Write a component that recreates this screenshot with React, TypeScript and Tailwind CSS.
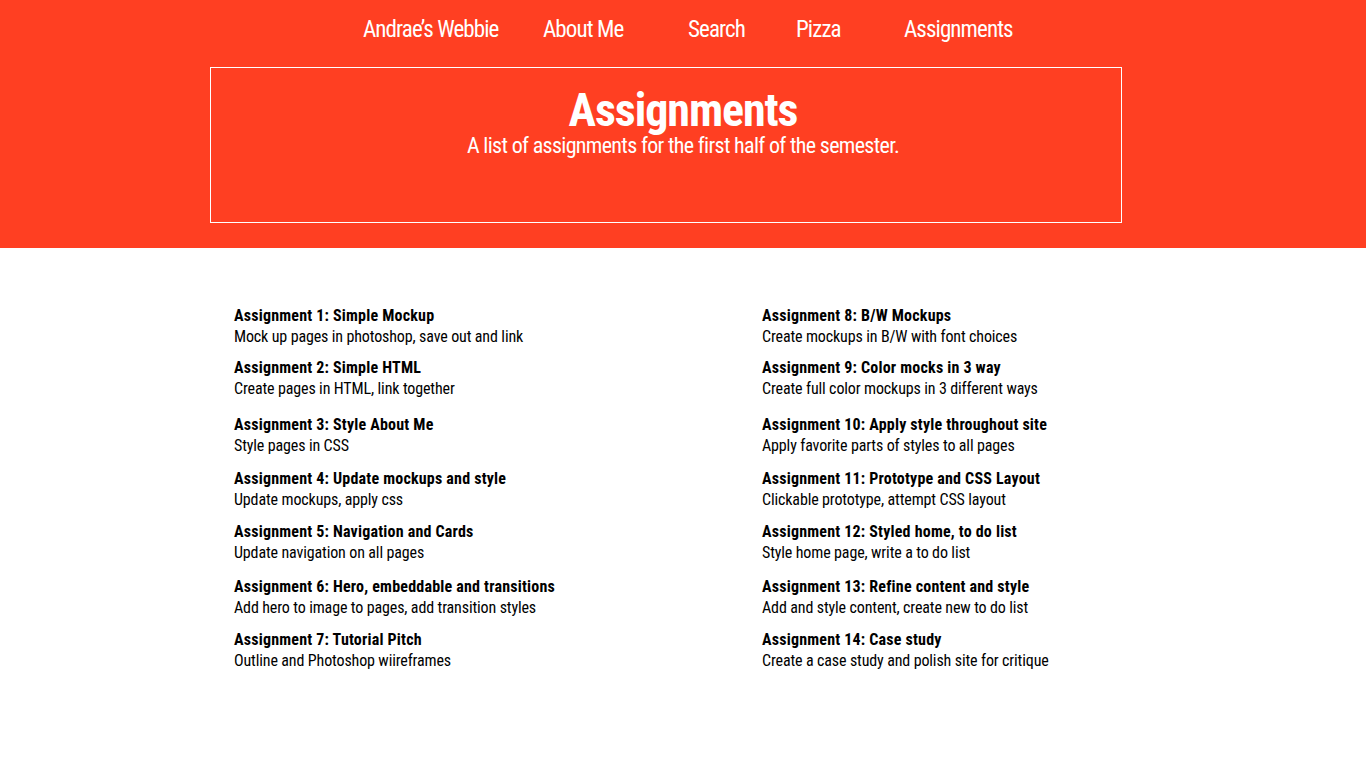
const nav = [
  { label: "Andrae’s Webbie", w: "w-[180px]" },
  { label: "About Me", w: "w-[145px]" },
  { label: "Search", w: "w-[108px]" },
  { label: "Pizza", w: "w-[108px]" },
  { label: "Assignments", w: "w-auto" },
];

// each row: left + right assignment, with spacing before it
const rows = [
  {
    gap: "mt-0",
    left: ["Assignment 1: Simple Mockup", "Mock up pages in photoshop, save out and link"],
    right: ["Assignment 8: B/W Mockups", "Create mockups in B/W with font choices"],
  },
  {
    gap: "mt-[10px]",
    left: ["Assignment 2: Simple HTML", "Create pages in HTML, link together"],
    right: ["Assignment 9: Color mocks in 3 way", "Create full color mockups in 3 different ways"],
  },
  {
    gap: "mt-[15px]",
    left: ["Assignment 3: Style About Me", "Style pages in CSS"],
    right: ["Assignment 10: Apply style throughout site", "Apply favorite parts of styles to all pages"],
  },
  {
    gap: "mt-[12px]",
    left: ["Assignment 4: Update mockups and style", "Update mockups, apply css"],
    right: ["Assignment 11: Prototype and CSS Layout", "Clickable prototype, attempt CSS layout"],
  },
  {
    gap: "mt-[11px]",
    left: ["Assignment 5: Navigation and Cards", "Update navigation on all pages"],
    right: ["Assignment 12: Styled home, to do list", "Style home page, write a to do list"],
  },
  {
    gap: "mt-[13px]",
    left: ["Assignment 6: Hero, embeddable and transitions", "Add hero to image to pages, add transition styles"],
    right: ["Assignment 13: Refine content and style", "Add and style content, create new to do list"],
  },
  {
    gap: "mt-[11px]",
    left: ["Assignment 7: Tutorial Pitch", "Outline and Photoshop wiireframes"],
    right: ["Assignment 14: Case study", "Create a case study and polish site for critique"],
  },
];

function Item({ data }: { data: string[] }) {
  return (
    <div className="text-[16px] leading-[21px] text-black">
      <div className="font-bold tracking-[0.2px]">{data[0]}</div>
      <div className="tracking-[-0.13px]">{data[1]}</div>
    </div>
  );
}

export default function App() {
  return (
    <div className="min-h-[768px] bg-white font-['Roboto_Condensed',_'Liberation_Sans',_sans-serif]">
      <header className="h-[248px] bg-[#ff3f22] text-white">
        <nav className="flex h-[60px] items-center pl-[363px] text-[23px] leading-[28px] tracking-[-0.9px]">
          {nav.map((n) => (
            <a key={n.label} href="#" className={n.w}>
              {n.label}
            </a>
          ))}
        </nav>
        <div className="ml-[210px] mt-[7px] h-[156px] w-[912px] border border-white pl-[34px] pt-[19px] text-center">
          <h1 className="text-[46px] font-bold leading-none tracking-[-1.05px]">Assignments</h1>
          <p className="mt-[2px] text-[22px] leading-none tracking-[-0.67px]">
            A list of assignments for the first half of the semester.
          </p>
        </div>
      </header>

      <main className="pl-[234px] pt-[57px]">
        {rows.map((r, i) => (
          <div key={i} className={`grid grid-cols-[528px_1fr] ${r.gap}`}>
            <Item data={r.left} />
            <Item data={r.right} />
          </div>
        ))}
      </main>
    </div>
  );
}
